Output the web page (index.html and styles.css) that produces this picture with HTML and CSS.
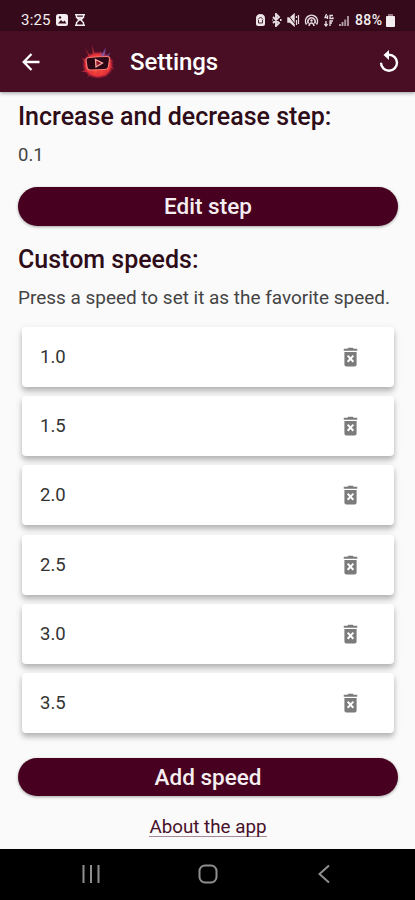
FILE: index.html
```html
<!DOCTYPE html>
<html lang="en">
<head>
<meta charset="utf-8">
<title>Settings</title>
<link rel="stylesheet" href="styles.css">
</head>
<body>
<svg class="defs" width="0" height="0">
  <symbol id="trash" viewBox="0 0 16 20">
    <path d="M0.8 1.2H4.6L5.6 0h4.8l1 1.2h3.8v2H.8z"/>
    <path fill-rule="evenodd" d="M1.5 4.6h13V18a2 2 0 0 1-2 2h-9a2 2 0 0 1-2-2zM4.2 9.3 6.6 11.8 4.2 14.3 5.7 15.8 8 13.4l2.3 2.4 1.5-1.5-2.4-2.5 2.4-2.5-1.5-1.5L8 10.2 5.7 7.8z"/>
  </symbol>
</svg>
<div class="screen">
  <header class="status">
    <span class="clock">3:25</span>
    <svg class="left-icons" width="32" height="14" viewBox="0 0 32 14">
      <rect x="1" y="1" width="12" height="12" rx="2.5" fill="#f4edf0"/>
      <path d="M3 10.5 6 7l2 2 1.5-1.5 2 3z" fill="#350b1b"/><circle cx="5" cy="4.5" r="1.2" fill="#350b1b"/>
      <path d="M20 1.7h10M20 12.3h10M21.5 2v2.2L24 7l-2.5 2.8V12M28.5 2v2.2L26 7l2.5 2.8V12M23 4.5h4L25 7z" fill="none" stroke="#f4edf0" stroke-width="1.4"/>
    </svg>
    <svg class="right-icons" width="97" height="14" viewBox="0 0 97 14" fill="none" stroke="#e6dce0" stroke-width="1.5">
      <path d="M1 5.5Q1 1 5.5 1T10 5.5V11q0 2-2 2H3q-2 0-2-2z" fill="#eee5e8" stroke="none"/>
      <path d="M3 6.5 5.5 4 8 6.5M3.500 7v3h4V7" stroke="#4b2634" stroke-width="1"/>
      <path d="m18 4 6 6-3 3V1l3 3-6 6M17 7h.5M25 7h1.5" stroke-width="1.9"/>
      <path d="M33 5h2l4-3.5v11L35 9h-2z" fill="#e6dce0"/><path d="m33 2 7 9" stroke="#350b1b" stroke-width="1"/><path d="M41.5 3v2M41.5 7v5M43.5 2v9" stroke-width="1.2"/>
      <path d="M51.500 11.500a6 6 0 1 1 10 0M53.500 10.500a3.600 3.600 0 1 1 6 0M54 13q.5-3 2.500-3t2.500 3"/><circle cx="56.5" cy="7.5" r="1.2" fill="#e6dce0" stroke="none"/>
      <path d="M71.500 1 70 4.500h3M72.500 2.500V6M78 2.500h-3v3h3V4.200M71 8v5M69.500 11l1.500 2 1.500-2M75 13V8h3M75 10h2" stroke-width="1.3"/>
      <path d="M85 13v-2M87.500 13V9" stroke="#b8a5ad" stroke-width="1.8"/><path d="M90.200 13V6.500M93 13V3" stroke="#a68e98" stroke-width="2"/>
    </svg>
    <span class="charge">88%</span>
    <svg class="battery" width="9" height="13" viewBox="0 0 9 13"><path d="M2.500 0h4v2H8q1 0 1 1v9q0 1-1 1H1q-1 0-1-1V3q0-1 1-1h1.500z" fill="#f4edf0"/><path d="M2.500 0h4v2h-4z" fill="#967480"/></svg>
  </header>
  <nav class="appbar">
    <svg class="back" width="18" height="18" viewBox="0 0 18 18" fill="none" stroke="#fff" stroke-width="2.3"><path d="M17.500 9H2M9.500 1 1.700 9l7.800 8"/></svg>
    <svg class="logo" width="34" height="34" viewBox="0 0 34 34">
      <defs><radialGradient id="glow"><stop offset=".35" stop-color="#ff5836"/><stop offset=".78" stop-color="#fa363b" stop-opacity=".9"/><stop offset="1" stop-color="#b21945" stop-opacity="0"/></radialGradient></defs>
      <ellipse cx="17" cy="20" rx="16" ry="14" fill="url(#glow)"/>
      <path d="m4 3 7 10-2 1zM11 0l4 12h-3zM1 13l9 3-6 2zM0 27l10-5-4 5zM6 33l5-9 3 1zM15 33l1-9 5 1zM25 32l-5-8 6-1zM34 25l-9-5 2-2zM33 16l-8 1 1-4z" fill="#e0343f" opacity=".6"/>
      <path d="m25 2-6 10 4 1zM30 7l-8 6 4 1z" fill="#684292" opacity=".9"/><path d="m19 6 1 5 5-6-3 7" fill="#a463a8" opacity=".7"/>
      <path d="M8 12.500q9-1 18-1 3 0 2.500 3l-1 7q-.5 3-4 3l-14 .5q-3 0-3.500-3L5 15q0-2.300 3-2.500z" fill="#2b0716" stroke="#fa7872" stroke-width="1.2"/>
      <path d="m14.500 14.500 7 3.500-6.500 4z" fill="#8c132b" stroke="#ffad9f" stroke-width="1.3"/>
    </svg>
    <h1>Settings</h1>
    <svg class="reset" width="20" height="24" viewBox="0 0 20 24"><path d="M10 4.800a8 8 0 1 1-8 8" fill="none" stroke="#fff" stroke-width="2.4"/><path d="M10 0v10L4.500 5z" fill="#fff"/></svg>
  </nav>
  <main>
    <h2>Increase and decrease step:</h2>
    <p class="step">0.1</p>
    <button class="edit">Edit step</button>
    <h2 class="custom">Custom speeds:</h2>
    <p class="hint">Press a speed to set it as the favorite speed.</p>
    <ul>
      <li><span>1.0</span><svg><use href="#trash"/></svg></li>
      <li><span>1.5</span><svg><use href="#trash"/></svg></li>
      <li><span>2.0</span><svg><use href="#trash"/></svg></li>
      <li><span>2.5</span><svg><use href="#trash"/></svg></li>
      <li><span>3.0</span><svg><use href="#trash"/></svg></li>
      <li><span>3.5</span><svg><use href="#trash"/></svg></li>
    </ul>
    <button class="add">Add speed</button>
    <a>About the app</a>
  </main>
  <footer>
    <svg width="18" height="18" viewBox="0 0 18 18"><path d="M1.500 0v18M9 0v18M16.500 0v18"/></svg>
    <svg width="20" height="20" viewBox="0 0 20 20"><rect x="1.5" y="1.5" width="17" height="17" rx="5.5"/></svg>
    <svg width="12" height="20" viewBox="0 0 12 20"><path d="m11 1.500-9.500 8.500 9.500 8.500"/></svg>
  </footer>
</div>
</body>
</html>
```
FILE: styles.css
```css
* { box-sizing: border-box; }
body { margin: 0; font-family: Roboto, sans-serif; }
h1, h2, p, ul { margin: 0; padding: 0; }
.defs { display: block; }
.screen { height: 900px; display: flex; flex-direction: column; background: #fafafa; overflow: hidden; }
.status { height: 31px; flex: none; display: flex; align-items: center; background: #350b1b; color: #f4edf0; padding: 9px 20px 0 21px; font-size: 15px; line-height: 20px; }
.clock { width: 34px; letter-spacing: .2px; white-space: nowrap; }
.left-icons { flex: none; }
.right-icons { margin-left: auto; flex: none; }
.charge { margin-left: 3px; width: 31px; font-size: 14px; font-weight: 500; letter-spacing: .4px; white-space: nowrap; }
.battery { flex: none; }
.appbar { height: 61px; flex: none; display: flex; align-items: center; background: #490e23; padding: 0 16px 0 22px; z-index: 1; box-shadow: 0 1px 4px rgba(0,0,0,.4); }
.logo { margin-left: 41px; }
h1 { margin-left: 15px; color: #fff; font-size: 24px; font-weight: 500; line-height: 30px; letter-spacing: -.1px; }
.reset { margin-left: auto; }
main { flex: 1; display: flex; flex-direction: column; padding: 11px 17px 0 18px; color: #2b1119; }
h2 { font-size: 25px; line-height: 28px; font-weight: 500; color: #2e0c18; white-space: nowrap; }
.step, .hint { font-size: 18.95px; line-height: 24px; color: #444; white-space: nowrap; }
.step { margin-top: 12px; font-size: 18.5px; }
button { flex: none; width: 380px; height: 38.5px; border: 0; border-radius: 20px; padding: 0; background: #47001f; color: #f5eef1; font: 500 22.5px/38px Roboto, sans-serif; box-shadow: 0 1px 3px rgba(0,0,0,.35); }
.edit { margin-top: 20px; }
.custom { margin-top: 20px; }
.hint { margin-top: 12px; }
ul { list-style: none; display: flex; flex-direction: column; gap: 9.2px; margin: 17.5px 4px 0; }
li { height: 60px; display: flex; align-items: center; justify-content: space-between; padding: 0 36px 0 18px; background: #fff; border-radius: 4px; box-shadow: 0 4px 5px rgba(0,0,0,.2), 0 3px 9px rgba(0,0,0,.12); font-size: 18.5px; color: #333; }
li svg { width: 15px; height: 20px; fill: #7b7b7b; }
.add { margin-top: 25px; }
a { align-self: center; margin-top: 20px; font-size: 18.8px; line-height: 22px; color: #47102a; border-bottom: 1px solid #a78a98; height: 21px; white-space: nowrap; }
footer { height: 51px; flex: none; background: #000; display: grid; grid-template-columns: 18px 20px 12px; align-items: center; justify-content: start; column-gap: 98px; padding: 0 0 2px 82px; }
footer svg { fill: none; stroke: #8f8f8f; stroke-width: 2; }
footer svg:last-child { margin-left: 2px; }
```
